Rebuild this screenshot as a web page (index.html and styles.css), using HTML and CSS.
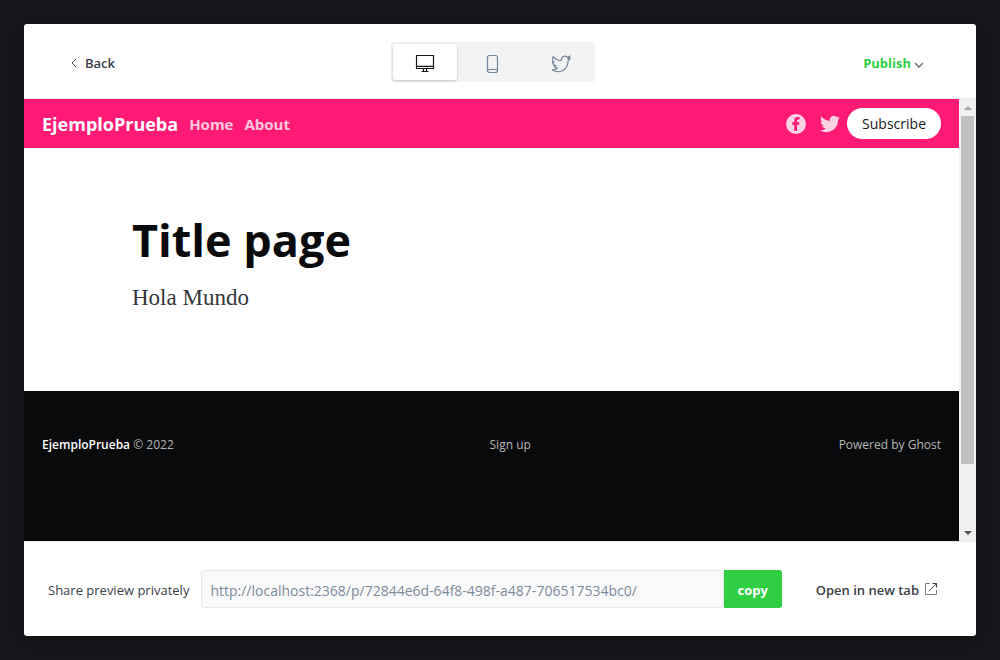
FILE: index.html
```html
<!DOCTYPE html>
<html lang="en">
<head>
<meta charset="utf-8">
<title>Preview</title>
<link rel="stylesheet" href="styles.css">
</head>
<body>
<div class="modal">
  <header class="toolbar">
    <div class="toolbar-side">
      <button class="back" type="button">
        <svg class="back-icon" viewBox="0 0 8 10"><path d="M6 1 2 5l4 4"/></svg>
        Back
      </button>
    </div>
    <div class="devices">
      <button class="device active" type="button" aria-label="Desktop">
        <svg viewBox="0 0 20 20"><path d="M1.500 1.500h17v13h-17zM1.500 12.300h17M8.500 14.500v3M11.500 14.500v3M6.500 17.500h7"/></svg>
      </button>
      <button class="device" type="button" aria-label="Mobile">
        <svg viewBox="0 0 20 20"><rect x="4.500" y="1.500" width="10" height="17" rx="2"/><path d="M4.500 15.500h10"/></svg>
      </button>
      <button class="device" type="button" aria-label="Twitter">
        <svg viewBox="0 0 20 20"><path d="M19 4.400l-1.900.2 1.500-2.200-2.300.8c-2.700-2.300-6.500-.4-6.100 3.300C6.900 6.700 4.300 5.200 2.200 2.700c-1 1.800-.7 4 1 5.400l-1.600-.4c.1 2 1.200 3.300 2.900 4l-1.500.2c.7 1.400 1.700 2.100 3.300 2.400-1.500 1.300-3.400 1.700-5.400 1.500 6.500 4.200 16 1.200 16.200-9.100z"/></svg>
      </button>
    </div>
    <div class="toolbar-side end">
      <button class="publish" type="button">Publish
        <svg class="publish-icon" viewBox="0 0 10 8"><path d="M1 2l4 4 4-4"/></svg>
      </button>
    </div>
  </header>

  <div class="viewport">
    <div class="site">
      <nav class="site-nav">
        <a class="brand" href="#">EjemploPrueba</a>
        <a class="nav-link" href="#">Home</a>
        <a class="nav-link" href="#">About</a>
        <div class="social">
          <a href="#" aria-label="Facebook"><svg viewBox="0 0 20 20"><path fill-rule="evenodd" d="M10 0a10 10 0 1 0 0 20 10 10 0 0 0 0-20zM8.300 17V10.700H6.200V8.200h2.100V6.600c0-2.300 1.200-3.600 3.400-3.600h1.800v2.500h-1.200c-1 0-1.300.5-1.300 1.300v1.400h2.500l-.4 2.500H11V17z"/></svg></a>
          <a href="#" aria-label="Twitter"><svg viewBox="0 0 20 20"><path d="M20 3.800c-.7.300-1.500.6-2.400.7.900-.5 1.500-1.300 1.800-2.300-.8.500-1.700.8-2.600 1A4.100 4.100 0 0 0 9.800 6.900C6.400 6.800 3.400 5.100 1.400 2.600.3 4.400.8 6.900 2.700 8.100c-.7 0-1.300-.2-1.900-.5 0 2 1.400 3.700 3.300 4.100-.6.200-1.200.2-1.900.1.500 1.600 2 2.800 3.800 2.800A8.300 8.300 0 0 1 0 16.300 11.600 11.600 0 0 0 17.900 6c.8-.6 1.500-1.300 2.100-2.200z"/></svg></a>
          <a class="subscribe" href="#">Subscribe</a>
        </div>
      </nav>
      <main class="article">
        <h1>Title page</h1>
        <p>Hola Mundo</p>
      </main>
      <footer class="site-footer">
        <div><a class="footer-brand" href="#">EjemploPrueba</a> © 2022</div>
        <a class="sign-up" href="#">Sign up</a>
        <a href="#">Powered by Ghost</a>
      </footer>
    </div>
    <div class="scrollbar">
      <span class="arrow up"></span>
      <span class="track"><span class="thumb"></span></span>
      <span class="arrow down"></span>
    </div>
  </div>

  <div class="share">
    <label for="url">Share preview privately</label>
    <div class="copy-group">
      <input id="url" type="text" readonly value="http://localhost:2368/p/72844e6d-64f8-498f-a487-706517534bc0/">
      <button class="copy" type="button">copy</button>
    </div>
    <a class="open-tab" href="#">Open in new tab
      <svg viewBox="0 0 14 14"><path class="frame" d="M6 1.500H1.500v11h11V8"/><path d="M5.500 8.500l7-7M8.500 1.500h4v4"/></svg>
    </a>
  </div>
</div>
</body>
</html>
```
FILE: styles.css
```css
* { box-sizing: border-box; }

body {
  margin: 0;
  min-height: 100vh;
  padding: 24px;
  display: flex;
  background: #15171a;
  color: #394047;
  font-family: "Open Sans", "Noto Sans", sans-serif;
  font-size: 13px;
}

a { color: inherit; text-decoration: none; }
button { border: 0; padding: 0; background: none; font: inherit; color: inherit; cursor: pointer; }
svg { display: block; fill: none; stroke: currentColor; }

.modal {
  flex: 1;
  display: flex;
  flex-direction: column;
  overflow: hidden;
  border-radius: 3px;
  background: #fff;
  box-shadow: 0 4px 24px rgba(0, 0, 0, 0.3);
}

.toolbar {
  display: flex;
  align-items: center;
  padding: 18px 60px 16px 46px;
  border-bottom: 1px solid #e5e9ed;
}
.toolbar-side { flex: 1; display: flex; padding-top: 2px; }
.end { justify-content: flex-end; }
.back { display: flex; align-items: center; gap: 7px; font-weight: 600; }
.back-icon { width: 8px; height: 10px; }

.devices { display: flex; padding: 2px; border-radius: 3px; background: #f1f3f5; }
.device {
  display: grid;
  place-items: center;
  width: 64px;
  height: 36px;
  padding-top: 3px;
  margin-right: 4px;
  border-radius: 3px;
  color: #738596;
}
.device:last-child { margin-right: 0; }
.device svg { width: 20px; height: 20px; stroke-width: 1.2; }
.active { background: #fff; color: #15171a; box-shadow: 0 1px 3px rgba(0, 0, 0, 0.2); }

.publish { display: flex; align-items: center; gap: 3px; margin-right: -8px; color: #30cf43; font-weight: 700; }
.publish-icon { width: 10px; height: 8px; margin-top: 4px; color: #626d79; stroke-width: 1.4; }

.viewport { flex: 1; display: flex; }
.site { flex: 1; display: flex; flex-direction: column; color: #090a0b; }

.site-nav {
  display: flex;
  align-items: center;
  gap: 11px;
  height: 49px;
  padding: 0 18px;
  background: #ff1a75;
  color: #fff;
}
.brand { font-size: 18px; font-weight: 700; }
.nav-link { font-size: 15px; font-weight: 700; opacity: 0.75; }
.social { display: flex; align-items: center; gap: 14px; margin-left: auto; }
.social svg { width: 20px; height: 20px; fill: #fff; stroke: none; opacity: 0.8; }
.subscribe {
  margin-left: -7px;
  padding: 0 15px;
  border-radius: 16px;
  background: #fff;
  color: #15171a;
  font-size: 14px;
  line-height: 31px;
}

.article { flex: 1; padding: 62px 108px 0; }
.article h1 { margin: 0; font-size: 45px; font-weight: 700; line-height: 60px; }
.article p {
  margin: 12px 0 0;
  color: #33373a;
  font-family: Georgia, "Liberation Serif", serif;
  font-size: 23px;
  line-height: 32px;
}

.site-footer {
  display: flex;
  justify-content: space-between;
  height: 150px;
  padding: 44px 18px 0;
  background: #090a0b;
  color: #b5b6b6;
  font-size: 12px;
  line-height: 20px;
}
.footer-brand { color: #fff; font-weight: 600; }
.sign-up { padding-left: 8px; }

.scrollbar {
  display: flex;
  flex-direction: column;
  width: 17px;
  padding: 0 2px;
  background: #f1f1f1;
}
.arrow { display: grid; place-items: center; height: 17px; }
.arrow::before { content: ""; border: 4px solid transparent; }
.up::before { border-top: 0; border-bottom-color: #a3a3a3; }
.down::before { border-bottom: 0; border-top-color: #505050; }
.track { flex: 1; }
.thumb { display: block; height: 348px; background: #c1c1c1; }

.share {
  display: flex;
  align-items: center;
  padding: 28px 38px 28px 24px;
  border-top: 1px solid #e5e9ed;
  font-weight: 600;
}
.share label, .open-tab { padding-top: 2px; }
.share label { font-weight: 500; }
.copy-group { flex: 1; display: flex; margin: 0 34px 0 12px; }
.copy-group input {
  flex: 1;
  min-width: 0;
  height: 38px;
  padding: 2px 8px 0;
  border: 1px solid #e5e9ed;
  border-radius: 3px;
  background: #fafafa;
  color: #7c8b9a;
  font: inherit;
  font-size: 14px;
  font-weight: 400;
}
.copy { width: 58px; padding-top: 2px; border-radius: 0 3px 3px 0; background: #30cf43; color: #fff; font-weight: 700; }
.open-tab { display: flex; align-items: center; gap: 5px; }
.open-tab svg { width: 14px; height: 14px; margin-bottom: 2px; }
.open-tab .frame { stroke: #7a8087; }
```
